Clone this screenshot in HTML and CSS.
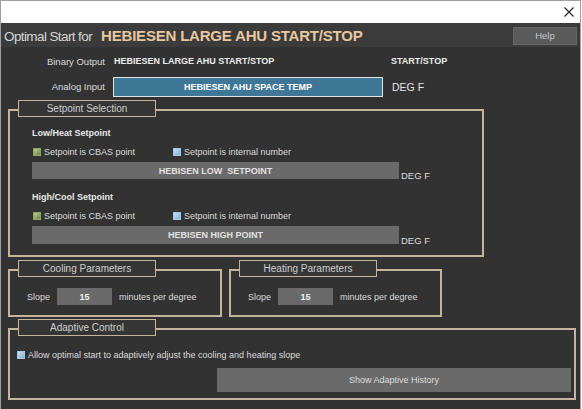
FILE: index.html
```html
<!DOCTYPE html>
<html>
<head>
<meta charset="utf-8">
<link rel="stylesheet" href="styles.css">
</head>
<body>
<div class="window">
  <div class="titlebar">
    <svg class="close" width="10" height="10" viewBox="0 0 10 10"><path d="M0.5 0.5 L9.5 9.5 M9.5 0.5 L0.5 9.5" stroke="#222" stroke-width="1.1"/></svg>
  </div>
  <div class="header">
    <div class="title"><span class="pre">Optimal Start for</span><span class="name">HEBIESEN LARGE AHU START/STOP</span></div>
    <div class="help">Help</div>
  </div>
  <div class="content">
    <div class="row row1">
      <div class="lbl">Binary Output</div>
      <div class="val bo">HEBIESEN LARGE AHU START/STOP</div>
      <div class="val ss">START/STOP</div>
    </div>
    <div class="row row2">
      <div class="lbl">Analog Input</div>
      <div class="ai">HEBIESEN AHU SPACE TEMP</div>
      <div class="val unit">DEG F</div>
    </div>

    <div class="group sp">
      <div class="legend">Setpoint Selection</div>
      <div class="subttl">Low/Heat Setpoint</div>
      <div class="checks">
        <div class="chk"><span class="box green"></span>Setpoint is CBAS point</div>
        <div class="chk c2"><span class="box blue"></span>Setpoint is internal number</div>
      </div>
      <div class="barrow">
        <div class="bar">HEBISEN LOW&nbsp; SETPOINT</div>
        <div class="deg">DEG F</div>
      </div>
      <div class="subttl s2">High/Cool Setpoint</div>
      <div class="checks">
        <div class="chk"><span class="box green"></span>Setpoint is CBAS point</div>
        <div class="chk c2"><span class="box blue"></span>Setpoint is internal number</div>
      </div>
      <div class="barrow">
        <div class="bar b2">HEBISEN HIGH POINT</div>
        <div class="deg">DEG F</div>
      </div>
    </div>

    <div class="params">
      <div class="group pg">
        <div class="legend">Cooling Parameters</div>
        <div class="slope"><span class="sl">Slope</span><span class="num">15</span><span class="mpd">minutes per degree</span></div>
      </div>
      <div class="group pg">
        <div class="legend">Heating Parameters</div>
        <div class="slope"><span class="sl">Slope</span><span class="num">15</span><span class="mpd">minutes per degree</span></div>
      </div>
    </div>

    <div class="group ad">
      <div class="legend">Adaptive Control</div>
      <div class="chk adchk"><span class="box blue"></span>Allow optimal start to adaptively adjust the cooling and heating slope</div>
      <div class="histrow"><div class="hist">Show Adaptive History</div></div>
    </div>
  </div>
</div>
</body>
</html>
```

FILE: styles.css
```css
* { box-sizing: border-box; }
html, body { margin: 0; padding: 0; background: #ffffff; }
body { width: 582px; height: 409px; overflow: hidden; font-family: "Liberation Sans", Arial, sans-serif; }

.window {
  width: 581px;
  height: 409px;
  border: 1px solid #a0a0a0;
  border-bottom: none;
  background: #323232;
  display: flex;
  flex-direction: column;
}

.titlebar {
  height: 22px;
  background: #ffffff;
  display: flex;
  justify-content: flex-end;
  align-items: center;
  padding-right: 6px;
  flex: none;
}

.header {
  height: 24px;
  background: #3b3b3b;
  display: flex;
  align-items: center;
  justify-content: space-between;
  padding: 0 3px 0 3px;
  flex: none;
}
.title { display: flex; align-items: baseline; padding-top: 1px; }
.pre { color: #d6d6d6; font-size: 13.5px; letter-spacing: -0.6px; }
.name { color: #e6c7a0; font-size: 15px; font-weight: bold; margin-left: 9px; letter-spacing: -0.2px; }
.help {
  width: 64px; height: 18px;
  background: #5a5a5a;
  border: 1px solid #666;
  color: #c8c8c8; font-size: 9.5px;
  display: flex; align-items: center; justify-content: center;
  margin-top: 1px;
}

.content { flex: 1; background: #323232; padding: 0 0 0 7px; }

.row { display: flex; align-items: center; }
.row1 { height: 28px; }
.row2 { height: 22px; padding-top: 1px; }
.lbl { width: 97px; text-align: right; color: #dcdcdc; font-size: 9.5px; }
.val { color: #ececec; font-size: 9px; font-weight: bold; }
.bo { margin-left: 9px; width: 277px; }
.ai {
  margin-left: 8px;
  width: 270px; height: 20px;
  background: #3f7797;
  border: 1px solid #e4e4e4;
  color: #ffffff; font-size: 9px; font-weight: bold;
  display: flex; align-items: center; justify-content: center;
}
.unit { margin-left: 9px; font-weight: normal; font-size: 10.5px; color: #e4e4e4; }

.group {
  position: relative;
  border: 2px solid #c3b59d;
}
.legend {
  position: absolute;
  left: 8px; top: -11px;
  width: 138px; height: 17px;
  background: #353535;
  border: 1px solid #c3b59d;
  color: #cfcfcf; font-size: 10px;
  display: flex; align-items: center; justify-content: center;
}

.sp { width: 476px; height: 148px; margin-top: 12px; padding: 13px 0 0 22px; }
.subttl { height: 18px; display: flex; align-items: center; color: #e8e8e8; font-size: 9px; font-weight: bold; }
.s2 { margin-top: 9px; }
.checks { height: 19px; display: flex; align-items: center; }
.chk { display: flex; align-items: center; color: #dcdcdc; font-size: 9px; }
.checks .chk:first-child { width: 140px; }
.box { width: 8px; height: 8px; display: inline-block; margin-right: 3px; margin-left: 1px; }
.green { background: linear-gradient(135deg, #b3cf85, #6c8a40); border: 1px solid #8da866; }
.blue { background: linear-gradient(135deg, #c9e2f4, #7fb0d6); border: 1px solid #a5c8e3; }
.barrow { display: flex; align-items: flex-end; margin-top: 1px; }
.bar {
  width: 367px; height: 17px;
  background: #6a6a6a;
  color: #e2e2e2; font-size: 9px; font-weight: bold;
  display: flex; align-items: center; justify-content: center;
}
.b2 { height: 18px; }
.deg { margin-left: 2px; color: #dedede; font-size: 9.5px; margin-bottom: -2px; }

.params { display: flex; gap: 7px; margin-top: 12px; }
.pg { width: 214px; height: 48px; }
.pg + .pg { width: 213px; }
.slope { display: flex; align-items: center; margin-top: 17px; padding-left: 17px; }
.sl { color: #dcdcdc; font-size: 9px; width: 30px; }
.num {
  width: 55px; height: 17px;
  background: #6a6a6a;
  color: #f0f0f0; font-size: 9px; font-weight: bold;
  display: flex; align-items: center; justify-content: center;
}
.mpd { color: #dcdcdc; font-size: 9px; margin-left: 7px; }

.ad { width: 568px; height: 72px; margin-top: 11px; padding: 18px 0 0 7px; }
.adchk { height: 14px; }
.adchk .box { margin-left: 0; }
.histrow { display: flex; justify-content: flex-end; padding-right: 3px; margin-top: 6px; }
.hist {
  width: 354px; height: 24px;
  background: #6a6a6a;
  color: #dedede; font-size: 9px;
  display: flex; align-items: center; justify-content: center;
}
```
